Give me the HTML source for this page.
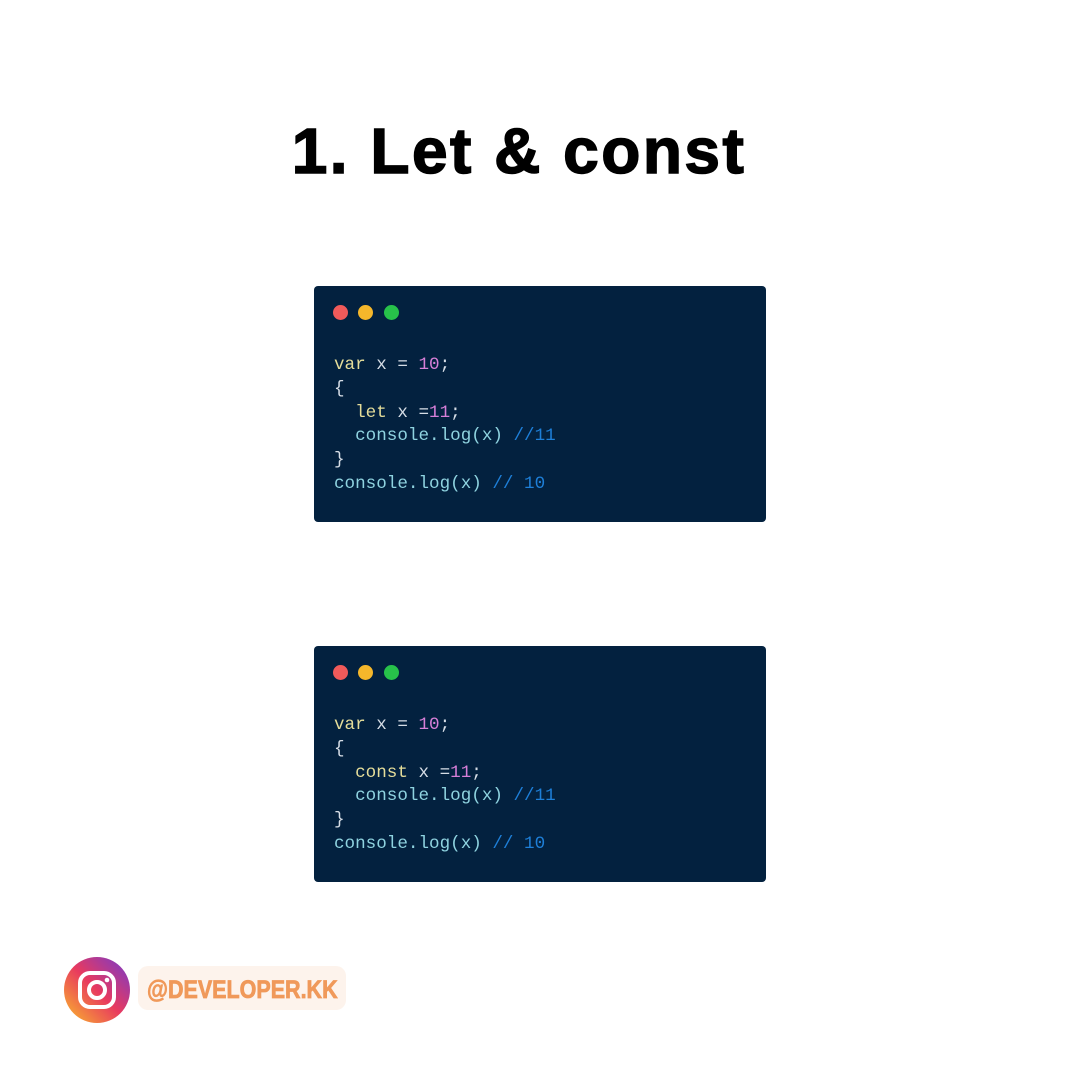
<!DOCTYPE html>
<html><head><meta charset="utf-8"><style>
body{margin:0;width:1080px;height:1080px;background:#fff;position:relative;overflow:hidden;font-family:"Liberation Sans",sans-serif}
h1{position:absolute;left:0;width:1038px;text-align:center;top:114px;margin:0;font-size:64px;font-weight:900;color:#000;letter-spacing:2.5px;-webkit-text-stroke:1.5px #000}
.box{position:absolute;left:314px;width:452px;height:236px;background:#03213f;border-radius:4px}
.dot{position:absolute;top:19px;width:15px;height:15px;border-radius:50%}
pre{position:absolute;left:20px;top:68px;margin:0;font-family:"Liberation Mono",monospace;font-size:17.6px;line-height:23.8px;color:#d6dde6}
.k{color:#e5dd9a}.n{color:#d77fd8}.f{color:#8fd3e0}.c{color:#1e7fd8}
</style></head><body>
<h1>1. Let &amp; const</h1>
<div class="box" style="top:286px">
<div class="dot" style="left:19px;background:#f05a5a"></div><div class="dot" style="left:44px;background:#f5b72b"></div><div class="dot" style="left:70px;background:#27c24a"></div>
<pre><span class="k">var</span> x = <span class="n">10</span>;
{
  <span class="k">let</span> x =<span class="n">11</span>;
  <span class="f">console.log(x)</span> <span class="c">//11</span>
}
<span class="f">console.log(x)</span> <span class="c">// 10</span></pre></div>
<div class="box" style="top:646px">
<div class="dot" style="left:19px;background:#f05a5a"></div><div class="dot" style="left:44px;background:#f5b72b"></div><div class="dot" style="left:70px;background:#27c24a"></div>
<pre><span class="k">var</span> x = <span class="n">10</span>;
{
  <span class="k">const</span> x =<span class="n">11</span>;
  <span class="f">console.log(x)</span> <span class="c">//11</span>
}
<span class="f">console.log(x)</span> <span class="c">// 10</span></pre></div>
<div style="position:absolute;left:64px;top:957px;width:66px;height:66px;border-radius:50%;background:linear-gradient(45deg,#f7a234 10%,#e83a5f 50%,#8a3ab9 90%)"></div>
<svg style="position:absolute;left:64px;top:957px" width="66" height="66" viewBox="0 0 66 66"><rect x="16" y="16" width="34" height="34" rx="10" fill="none" stroke="#fff" stroke-width="4"/><circle cx="33" cy="33" r="8" fill="none" stroke="#fff" stroke-width="4"/><circle cx="43" cy="23" r="2.3" fill="#fff"/></svg>
<div style="position:absolute;left:138px;top:966px;width:208px;height:44px;border-radius:10px;background:#fdf3ec"></div>
<div style="position:absolute;left:147px;top:976px;font-size:25px;font-weight:bold;color:#f0995a;-webkit-text-stroke:0.8px #f0995a;transform:scaleX(0.86);transform-origin:left">@DEVELOPER.KK</div>
</body></html>
